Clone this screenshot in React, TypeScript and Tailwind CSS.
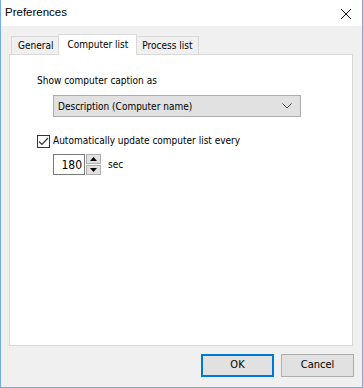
import { useState } from 'react'

const font = { fontFamily: '"DejaVu Sans Condensed", "Liberation Sans", Arial, sans-serif' }

const Tab = ({ label, active, onClick }: { label: string; active?: boolean; onClick: () => void }) => {
  if (active) {
    return (
      <button
        onClick={onClick}
        className="relative z-10 -mx-[2px] -mb-px h-[21px] border border-b-0 border-[#d9d9d9] bg-white px-[8px] text-[10px] leading-[18px] text-black"
      >
        {label}
      </button>
    )
  }
  return (
    <button
      onClick={onClick}
      className="h-[18px] border border-b-0 border-[#d9d9d9] bg-[#f0f0f0] px-[6px] text-[10px] leading-[17px] text-black"
    >
      {label}
    </button>
  )
}

const App = () => {
  const [tab, setTab] = useState(1)
  const [auto, setAuto] = useState(true)
  const [secs, setSecs] = useState(180)

  return (
    <div
      className="flex h-[388px] w-[363px] flex-col border border-t-0 border-[#74ade5] bg-[#f0f0f0]"
      style={font}
    >
      <div className="flex h-[26px] items-center justify-between bg-white pl-[4px] pr-[10px]">
        <span className="text-[11.5px] text-black" style={{ fontFamily: '"Liberation Sans", Arial, sans-serif' }}>
          Preferences
        </span>
        <svg width="12" height="12" viewBox="0 0 12 12" className="mt-[1px]">
          <path d="M1 1 L11 11 M11 1 L1 11" stroke="#111" strokeWidth="1" />
        </svg>
      </div>

      <div className="flex flex-1 flex-col px-[8px] pt-[8px]">
        <div className="flex h-[20px] items-end pl-[2px]">
          {['General', 'Computer list', 'Process list'].map((t, i) => (
            <Tab key={t} label={t} active={tab === i} onClick={() => setTab(i)} />
          ))}
        </div>

        <div className="h-[292px] w-[344px] border border-[#d9d9d9] bg-white pl-[27px] pt-[19px] text-[10px] text-black">
          <div className="leading-[14px]">Show computer caption as</div>

          <div className="mt-[7px] ml-[16px] flex h-[22px] w-[248px] items-center justify-between border border-[#adadad] bg-[#e1e1e1] pl-[4px] pr-[8px]">
            <span>Description (Computer name)</span>
            <svg width="10" height="6" viewBox="0 0 10 6">
              <path d="M0.5 0.5 L5 5 L9.5 0.5" stroke="#444" strokeWidth="1" fill="none" />
            </svg>
          </div>

          <label className="mt-[17px] flex items-center gap-[3px]" onClick={() => setAuto(!auto)}>
            <span className="flex h-[13px] w-[13px] items-center justify-center border border-[#333] bg-white">
              {auto && (
                <svg width="11" height="9" viewBox="0 0 11 9">
                  <path d="M1 4.5 L4 7.5 L10 1" stroke="#333" strokeWidth="1.2" fill="none" />
                </svg>
              )}
            </span>
            <span className="leading-[14px]">Automatically update computer list every</span>
          </label>

          <div className="mt-[6px] ml-[16px] flex items-center">
            <div className="flex h-[21px] w-[32px] items-center justify-end border border-[#7a7a7a] bg-white pr-[2px] text-[12px]">
              {secs}
            </div>
            <div className="ml-[1px] flex flex-col gap-[1px]">
              <button
                onClick={() => setSecs(secs + 1)}
                className="flex h-[10px] w-[15px] items-center justify-center border border-[#adadad] bg-[#e1e1e1]"
              >
                <svg width="7" height="4" viewBox="0 0 7 4">
                  <path d="M3.5 0 L7 4 L0 4 Z" fill="#000" />
                </svg>
              </button>
              <button
                onClick={() => setSecs(secs - 1)}
                className="flex h-[10px] w-[15px] items-center justify-center border border-[#adadad] bg-[#e1e1e1]"
              >
                <svg width="7" height="4" viewBox="0 0 7 4">
                  <path d="M0 0 L7 0 L3.5 4 Z" fill="#000" />
                </svg>
              </button>
            </div>
            <span className="ml-[7px]">sec</span>
          </div>
        </div>

        <div className="mt-[8px] flex justify-end gap-[7px]">
          <button className="h-[23px] w-[73px] border-2 border-[#0078d7] bg-[#e1e1e1] text-[11px] text-black">
            OK
          </button>
          <button className="h-[23px] w-[73px] border border-[#adadad] bg-[#e1e1e1] text-[11px] text-black">
            Cancel
          </button>
        </div>
      </div>
    </div>
  )
}

export default App
